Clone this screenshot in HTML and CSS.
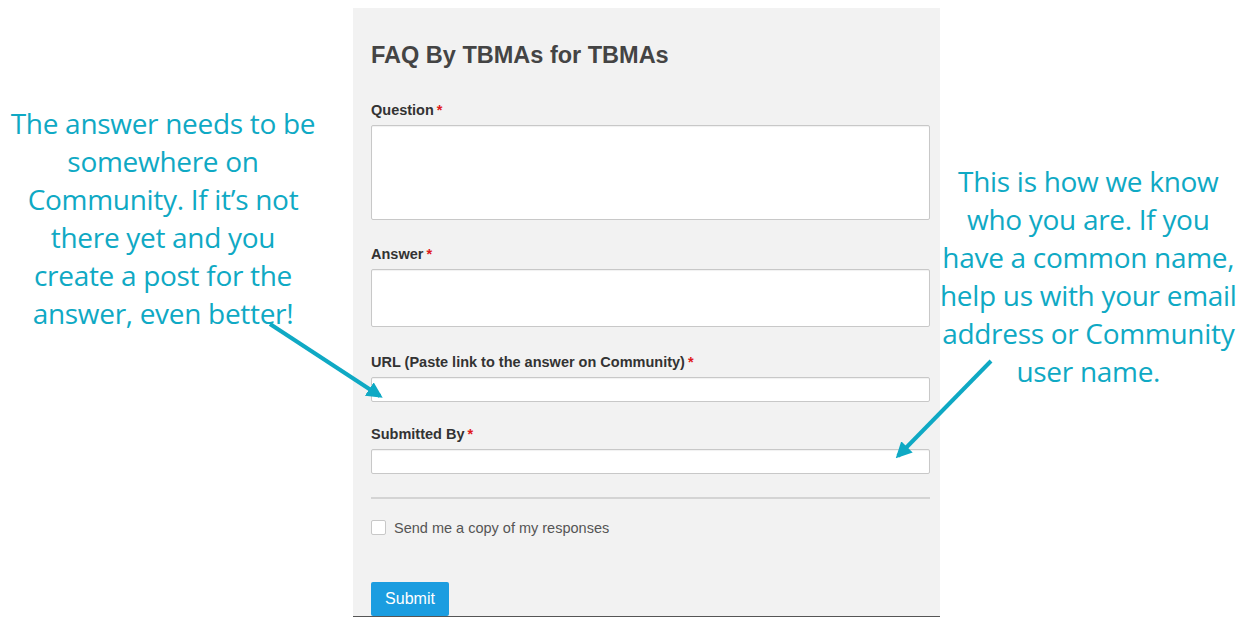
FILE: index.html
```html
<!DOCTYPE html>
<html>
<head>
<meta charset="utf-8">
<link rel="stylesheet" href="styles.css">
</head>
<body>
<div class="page">
  <div class="note note-left">The answer needs to be<br>somewhere on<br>Community. If it’s not<br>there yet and you<br>create a post for the<br>answer, even better!</div>
  <form class="panel">
    <h1 class="title">FAQ By TBMAs for TBMAs</h1>
    <label class="label">Question<span class="req">*</span></label>
    <div class="field area-lg"></div>
    <label class="label">Answer<span class="req">*</span></label>
    <div class="field area-sm"></div>
    <label class="label">URL (Paste link to the answer on Community)<span class="req">*</span></label>
    <div class="field line"></div>
    <label class="label">Submitted By<span class="req">*</span></label>
    <div class="field line"></div>
    <div class="rule"></div>
    <div class="check-row"><span class="check"></span><span class="check-text">Send me a copy of my responses</span></div>
    <div class="submit">Submit</div>
  </form>
  <div class="note note-right">This is how we know<br>who you are. If you<br>have a common name,<br>help us with your email<br>address or Community<br>user name.</div>
  <svg class="arrows" width="1247" height="643" viewBox="0 0 1247 643">
    <defs>
      <marker id="ah" viewBox="0 0 10 10" refX="8" refY="5" markerWidth="4" markerHeight="4" orient="auto">
        <path d="M0,0 L10,5 L0,10 z" fill="#0fa9c4"/>
      </marker>
    </defs>
    <line x1="270" y1="324" x2="380" y2="396" stroke="#0fa9c4" stroke-width="4" marker-end="url(#ah)"/>
    <line x1="991" y1="361" x2="898" y2="456" stroke="#0fa9c4" stroke-width="4" marker-end="url(#ah)"/>
  </svg>
</div>
</body>
</html>
```
FILE: styles.css
```css
html, body { margin: 0; padding: 0; background: #fff; }
.page {
  position: relative;
  width: 1247px;
  height: 643px;
  display: grid;
  grid-template-columns: 353px 587px 1fr;
  align-items: start;
  overflow: hidden;
}
.note {
  font-family: "Open Sans", "Noto Sans", sans-serif;
  color: #0fa9c4;
  font-size: 28px;
  line-height: 38px;
  text-align: center;
  letter-spacing: -0.3px;
  white-space: nowrap;
}
.note-left { padding-top: 104px; width: 326px; }
.note-right { padding-top: 162px; padding-right: 14px; }
.panel {
  margin: 8px 0 0;
  height: 609px;
  box-sizing: border-box;
  background: #f2f2f2;
  border-bottom: 1px solid #555;
  padding: 34px 10px 0 18px;
  display: flex;
  flex-direction: column;
  font-family: "Liberation Sans", Arial, sans-serif;
  overflow: hidden;
}
.title {
  margin: 0 0 33px;
  font-size: 23.5px;
  line-height: 26px;
  font-weight: bold;
  color: #444;
}
.label {
  font-size: 14.5px;
  line-height: 18px;
  font-weight: bold;
  color: #333;
  margin-bottom: 6px;
}
.req { color: #e0191c; margin-left: 3px; }
.field {
  background: #fff;
  border: 1px solid #c8c8c8;
  border-radius: 2px;
  box-shadow: inset 0 1px 1px rgba(0,0,0,0.06);
  box-sizing: border-box;
  margin-bottom: 25px;
}
.area-lg { height: 102px; }
.area-sm { height: 62px; margin-bottom: 26px; }
.line { height: 27px; margin-bottom: 23px; }
.rule { height: 2px; background: #d4d4d4; margin: 0 0 20px; }
.check-row { display: flex; align-items: center; gap: 8px; height: 18px; }
.check {
  width: 15px; height: 15px;
  background: #fff;
  border: 1px solid #c8c8c8;
  border-radius: 2px;
  box-sizing: border-box;
}
.check-text { font-size: 14.5px; color: #555; }
.submit {
  margin-top: 46px;
  align-self: flex-start;
  width: 78px;
  height: 36px;
  background: #1b9de0;
  color: #fff;
  font-size: 16px;
  line-height: 34px;
  text-align: center;
  border-radius: 2px;
  box-sizing: border-box;
}
.arrows { position: absolute; left: 0; top: 0; pointer-events: none; }
```
